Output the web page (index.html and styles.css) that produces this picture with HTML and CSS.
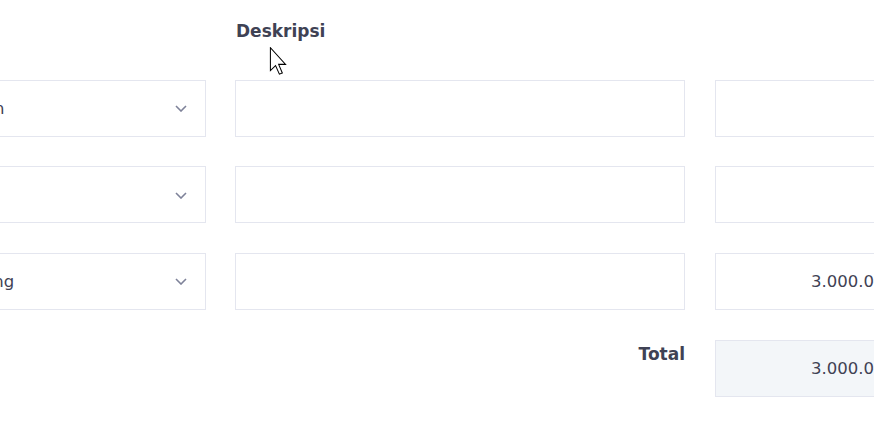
FILE: index.html
```html
<!DOCTYPE html>
<html lang="id">
<head>
<meta charset="utf-8">
<title>Deskripsi</title>
<link rel="stylesheet" href="styles.css">
</head>
<body>
<div class="page">
  <div class="grid">
    <div class="head c1"></div>
    <div class="head c2">Deskripsi</div>
    <div class="head head-right c3">Nominal</div>

    <div class="select c1"><span class="select-text">Bahan</span><svg class="chev" viewBox="0 0 12 7" width="12" height="7"><path d="M1 1 L6 6 L11 1" fill="none" stroke="#7e8299" stroke-width="1.6"/></svg></div>
    <div class="input c2"></div>
    <div class="input num c3"></div>

    <div class="select c1"><span class="select-text">Gaji</span><svg class="chev" viewBox="0 0 12 7" width="12" height="7"><path d="M1 1 L6 6 L11 1" fill="none" stroke="#7e8299" stroke-width="1.6"/></svg></div>
    <div class="input c2"></div>
    <div class="input num c3"></div>

    <div class="select c1"><span class="select-text">Piutang</span><svg class="chev" viewBox="0 0 12 7" width="12" height="7"><path d="M1 1 L6 6 L11 1" fill="none" stroke="#7e8299" stroke-width="1.6"/></svg></div>
    <div class="input c2"></div>
    <div class="input num c3">3.000.000</div>

    <div class="c1"></div>
    <div class="total-label c2">Total</div>
    <div class="input num solid c3">3.000.000</div>
  </div>
  <svg class="cursor" width="19" height="28" viewBox="0 0 12 19"><path d="M0.5 0.5 L0.5 16 L4 12.6 L6.6 18.4 L8.6 17.6 L6.1 11.8 L10.8 11.8 Z" fill="#fff" stroke="#000" stroke-width="0.7" stroke-linejoin="miter"/></svg>
</div>
</body>
</html>
```

FILE: styles.css
```css
html, body {
  margin: 0;
  padding: 0;
  background: #ffffff;
}
body {
  width: 874px;
  height: 422px;
  overflow: hidden;
  font-family: "DejaVu Sans", "Open Sans", sans-serif;
  color: #3f4254;
}
.page {
  position: relative;
  width: 874px;
  height: 422px;
  overflow: hidden;
}
.grid {
  display: grid;
  grid-template-columns: 271px 29px 450px 30px 237px;
  row-gap: 29.67px;
  margin-left: -65px;
  padding-top: 17px;
  grid-template-rows: 33px 57px 57px 57px 57px;
}
.c1 { grid-column: 1; }
.c2 { grid-column: 3; }
.c3 { grid-column: 5; }
.head {
  font-size: 17px;
  font-weight: 700;
  line-height: 28px;
  padding-left: 1px;
  color: #3f4254;
}
.head-right {
  text-align: right;
}
.select, .input {
  box-sizing: border-box;
  height: 57px;
  border: 1px solid #e4e6ef;
  background: #fff;
  font-size: 16.5px;
  display: flex;
  align-items: center;
}
.select {
  padding: 0 18px 0 16px;
  justify-content: space-between;
}
.select-text {
  color: #3f4254;
}
.chev {
  display: block;
  margin-top: 1px;
}
.num {
  justify-content: flex-end;
  padding-right: 56px;
  color: #3f4254;
}
.solid {
  background: #f3f6f9;
}
.total-label {
  text-align: right;
  font-size: 17px;
  font-weight: 700;
  line-height: 26px;
  padding-top: 1px;
  color: #3f4254;
}
.cursor {
  position: absolute;
  left: 269px;
  top: 47px;
}
```
